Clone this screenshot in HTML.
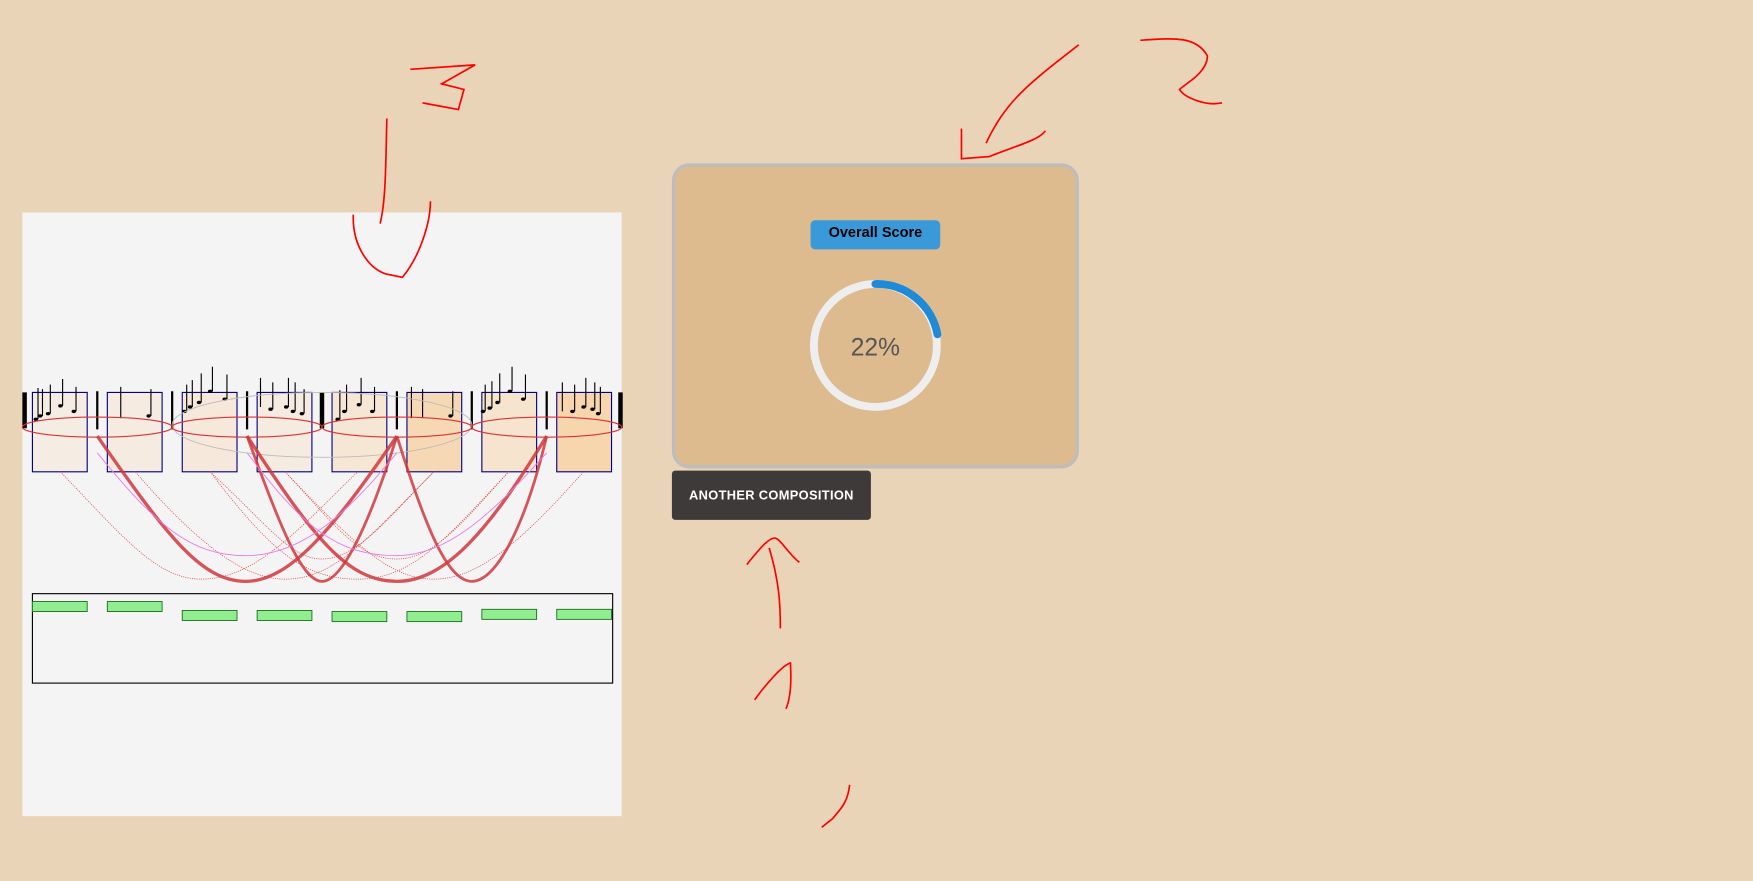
<!DOCTYPE html>
<html><head><style>html,body{margin:0;padding:0;background:#ead4b8;overflow:hidden}svg{display:block}</style></head>
<body>
<svg width="1753" height="881" viewBox="0 0 1568 788" xmlns="http://www.w3.org/2000/svg" font-family="Liberation Sans, sans-serif">
<rect width="1568" height="788" fill="#ead4b8"/>
<rect x="20" y="190" width="536" height="540" fill="#f4f4f4"/>
<g stroke="#000080" stroke-width="1">
<rect x="29" y="351" width="49" height="71" fill="#f5ede4"/>
<rect x="96" y="351" width="49" height="71" fill="#f5ebe0"/>
<rect x="163" y="351" width="49" height="71" fill="#f6e8da"/>
<rect x="230" y="351" width="49" height="71" fill="#f5ebe0"/>
<rect x="297" y="351" width="49" height="71" fill="#f6e6d4"/>
<rect x="364" y="351" width="49" height="71" fill="#f7d8b4"/>
<rect x="431" y="351" width="49" height="71" fill="#f6e4cf"/>
<rect x="498" y="351" width="49" height="71" fill="#f7d6ae"/>
</g>
<g stroke="#000" fill="none">
<path d="M22 351v32M288 351v32M555 351v32" stroke-width="4"/>
<path d="M87 350v34M154 350v34M221 350v34M355 350v34M422 350v34M489 350v34" stroke-width="2"/>
<path d="M34 375v-28M38 372v-24M45 370v-26M56 363v-24M68 368v-22M108 374v-28M135 372v-24M167 368v-24M172 364v-24M180 360v-26M190 350v-22M203 357v-22M233 364v-26M244 366v-24M258 364v-26M264 368v-26M272 370v-22M304 375v-26M310 368v-24M323 362v-24M335 368v-22M368 374v-28M378 374v-26M405 372v-22M434 368v-24M440 365v-24M447 360v-26M458 350v-22M470 357v-22M503 368v-26M514 368v-24M524 364v-26M532 366v-24M537 370v-24"/>
</g>
<g fill="#000">
<ellipse cx="32" cy="375" rx="2" ry="1.5"/><ellipse cx="36" cy="372" rx="2" ry="1.5"/><ellipse cx="43" cy="370" rx="2" ry="1.5"/><ellipse cx="54" cy="363" rx="2" ry="1.5"/><ellipse cx="66" cy="368" rx="2" ry="1.5"/>
<ellipse cx="133" cy="372" rx="2" ry="1.5"/><ellipse cx="165" cy="368" rx="2" ry="1.5"/><ellipse cx="170" cy="364" rx="2" ry="1.5"/><ellipse cx="178" cy="360" rx="2" ry="1.5"/><ellipse cx="188" cy="350" rx="2" ry="1.5"/><ellipse cx="201" cy="357" rx="2" ry="1.5"/>
<ellipse cx="242" cy="366" rx="2" ry="1.5"/><ellipse cx="256" cy="364" rx="2" ry="1.5"/><ellipse cx="262" cy="368" rx="2" ry="1.5"/><ellipse cx="270" cy="370" rx="2" ry="1.5"/>
<ellipse cx="302" cy="375" rx="2" ry="1.5"/><ellipse cx="308" cy="368" rx="2" ry="1.5"/><ellipse cx="321" cy="362" rx="2" ry="1.5"/><ellipse cx="333" cy="368" rx="2" ry="1.5"/><ellipse cx="403" cy="372" rx="2" ry="1.5"/>
<ellipse cx="432" cy="368" rx="2" ry="1.5"/><ellipse cx="438" cy="365" rx="2" ry="1.5"/><ellipse cx="445" cy="360" rx="2" ry="1.5"/><ellipse cx="456" cy="350" rx="2" ry="1.5"/><ellipse cx="468" cy="357" rx="2" ry="1.5"/>
<ellipse cx="512" cy="368" rx="2" ry="1.5"/><ellipse cx="522" cy="364" rx="2" ry="1.5"/><ellipse cx="530" cy="366" rx="2" ry="1.5"/><ellipse cx="535" cy="370" rx="2" ry="1.5"/>
</g>
<ellipse cx="288" cy="380" rx="134" ry="29" fill="none" stroke="#bbb" stroke-width="0.8"/>
<g fill="none" stroke="#d33" stroke-width="1">
<ellipse cx="87" cy="382" rx="67" ry="9"/><ellipse cx="221" cy="382" rx="67" ry="9"/><ellipse cx="355" cy="382" rx="67" ry="9"/><ellipse cx="489" cy="382" rx="67" ry="9"/>
</g>
<g fill="none" stroke="#d0373c" stroke-opacity="0.85">
<path d="M87 390 C150 480 180 520 220 520 C260 520 300 470 355 390" stroke-width="3"/>
<path d="M221 390 C280 480 310 520 355 520 C400 520 440 470 489 390" stroke-width="3"/>
<path d="M221 390 C250 470 270 520 288 520 C306 520 330 470 355 390" stroke-width="2.5"/>
<path d="M355 390 C380 470 400 520 422 520 C444 520 470 470 489 390" stroke-width="2.5"/>
</g>
<g fill="none" stroke="#d33" stroke-width="0.6" stroke-dasharray="1 1">
<path d="M54 422 C110 480 140 518 180 518 C230 518 270 470 320 422"/>
<path d="M188 422 C240 470 260 500 288 500 C320 500 350 460 388 422"/>
<path d="M255 422 C300 470 320 500 355 500 C390 500 420 460 455 422"/>
<path d="M121 422 C180 490 220 518 255 518 C300 518 330 480 388 422"/>
<path d="M188 422 C240 490 270 518 320 518 C370 518 400 480 455 422"/>
<path d="M255 422 C320 490 350 518 388 518 C430 518 470 480 522 422"/>
</g>
<g fill="none" stroke="#e87be8" stroke-width="0.8">
<path d="M87 405 C140 470 170 497 220 497 C270 497 310 460 355 405"/>
<path d="M221 405 C270 470 300 497 355 497 C400 497 440 460 489 405"/>
</g>
<rect x="29" y="531" width="519" height="80" fill="none" stroke="#000" stroke-width="1"/>
<g fill="#90ee90" stroke="#1a6e1a" stroke-width="0.8">
<rect x="29" y="538" width="49" height="9"/><rect x="96" y="538" width="49" height="9"/>
<rect x="163" y="546" width="49" height="9"/><rect x="230" y="546" width="49" height="9"/>
<rect x="297" y="547" width="49" height="9"/><rect x="364" y="547" width="49" height="9"/>
<rect x="431" y="545" width="49" height="9"/><rect x="498" y="545" width="49" height="9"/>
</g>
<rect x="602.5" y="147.5" width="361" height="270" rx="14" fill="#ddbb8f" stroke="#bdbdbd" stroke-width="3"/>
<rect x="725" y="197" width="116" height="26" rx="4" fill="#3a9ad9"/>
<text x="783" y="212" font-size="13" font-weight="bold" text-anchor="middle" fill="#000">Overall Score</text>
<circle cx="783" cy="309" r="55" fill="none" stroke="#eeeeee" stroke-width="7"/>
<path d="M783 254 A55 55 0 0 1 838.5 299" fill="none" stroke="#1e8ad8" stroke-width="7" stroke-linecap="round"/>
<text x="783" y="318" font-size="22" text-anchor="middle" fill="#555">22%</text>
<rect x="601" y="421" width="178" height="44" rx="3" fill="#3e3a3a"/>
<text x="690" y="447" font-size="11.5" font-weight="bold" text-anchor="middle" fill="#fff" letter-spacing="0.3">ANOTHER COMPOSITION</text>
<g fill="none" stroke="#f00" stroke-width="1.5">
<path d="M367 62 L425 58 L395 75 L415 80 L410 98 L378 92"/>
<path d="M346 106 C345 150 345 180 340 200"/>
<path d="M316 192 C315 220 330 240 345 245 L360 248 C375 230 385 200 385 180"/>
<path d="M965 40 C920 75 900 90 882 128"/>
<path d="M860 115 L860 142 L885 140 C910 130 930 125 935 117"/>
<path d="M1020 36 C1050 34 1070 32 1080 50 C1080 65 1060 75 1055 80 C1060 88 1080 95 1093 92"/>
<path d="M668 505 C680 490 690 478 695 482 C700 485 705 495 715 503"/>
<path d="M688 490 C697 520 698 540 698 562"/>
<path d="M675 626 C685 612 700 595 707 593 C708 610 707 625 703 634"/>
<path d="M760 702 C758 720 750 725 745 732 L735 740"/>
</g>
</svg>
</body></html>
